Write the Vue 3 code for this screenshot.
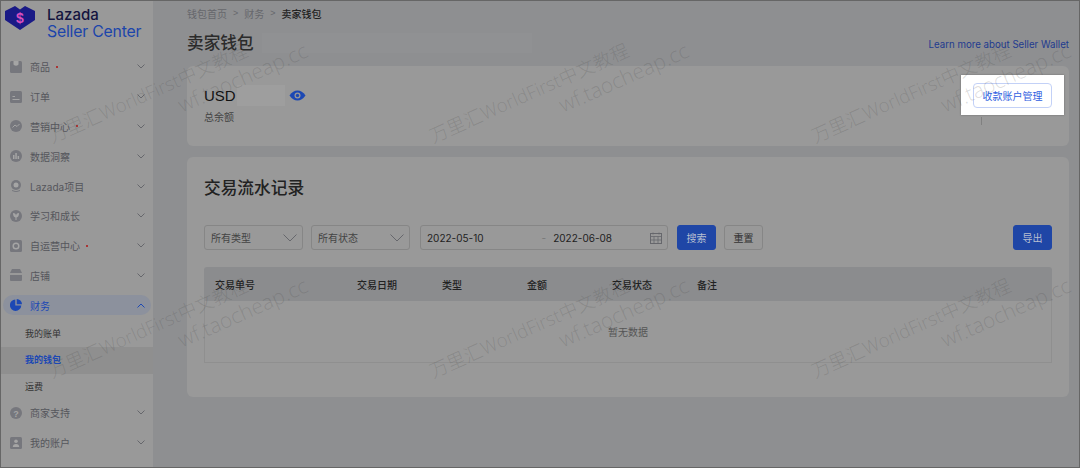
<script setup>
const navTop = [
  { t:'商品', dot:true, i:'bag' }, { t:'订单', i:'order' }, { t:'营销中心', dot:true, i:'chart' },
  { t:'数据洞察', i:'data' }, { t:'Lazada项目', i:'pin' }, { t:'学习和成长', i:'grow' },
  { t:'自运营中心', dot:true, i:'self' }, { t:'店铺', i:'shop' },
]
const subs = [{ t:'我的账单' }, { t:'我的钱包', active:true }, { t:'运费' }]
const navEnd = [{ t:'商家支持', i:'help' }, { t:'我的账户', i:'user' }]
const cols = ['交易单号','交易日期','类型','金额','交易状态','备注']
const marks = []
for (const y of [145, 380]) for (const x of [48, 429, 811]) marks.push({ left: x + 'px', top: (y - 22) + 'px' })
</script>

<template>
  <div class="page">
    <aside class="side">
      <div class="brand">
        <svg class="logo" viewBox="0 0 30 24" width="30" height="24">
          <path d="M0 5 L10 0 L15 3.500 L20 0 L30 5 V14 L15 24 L0 14 Z" fill="#1a1a86"/>
          <text x="15" y="17" text-anchor="middle" class="dollar">$</text>
        </svg>
        <div class="brand-text">
          <div class="b1">Lazada</div>
          <div class="b2">Seller Center</div>
        </div>
      </div>
      <nav class="nav">
        <div v-for="n in navTop" :key="n.t" class="item">
          <svg class="ic" viewBox="0 0 12 12" width="12" height="12">
            <template v-if="n.i==='bag'"><rect width="12" height="12" rx="1.5" fill="#76777d"/><path d="M3.500 0v3.500q2.500 2.500 5 0V0" fill="#a5a5a5"/></template>
            <template v-else-if="n.i==='order'"><rect width="12" height="12" rx="1.5" fill="#76777d"/><path d="M2.500 5h2.500v1H2.500zM2.500 8h7v1h-7z" fill="#a5a5a5"/></template>
            <template v-else-if="n.i==='chart'"><circle cx="6" cy="6" r="6" fill="#76777d"/><path d="M2.500 7.500 5 5l2 1.500L9.500 4" fill="none" stroke="#a5a5a5"/></template>
            <template v-else-if="n.i==='data'"><circle cx="6" cy="6" r="6" fill="#76777d"/><path d="M3 5h1.500v4H3zM5.300 3h1.500v6H5.300zM7.600 6h1.500v3H7.600z" fill="#a5a5a5"/></template>
            <template v-else-if="n.i==='pin'"><circle cx="6" cy="5" r="5" fill="#76777d"/><circle cx="6" cy="5" r="2.500" fill="#a5a5a5"/><path d="M2 10.500q4 2.500 8 0" stroke="#76777d" fill="none"/></template>
            <template v-else-if="n.i==='grow'"><circle cx="6" cy="6" r="6" fill="#76777d"/><path d="M3 3q3 0 3 3 0-3 3-3 0 4-2.500 4.500V10h-1V7.500Q3 7 3 3z" fill="#a5a5a5"/></template>
            <template v-else-if="n.i==='self'"><rect width="12" height="12" rx="1.5" fill="#76777d"/><circle cx="6" cy="6" r="2.800" fill="none" stroke="#a5a5a5" stroke-width="1.500"/></template>
            <template v-else><path d="M2 0h8l2 4H0zM0 6h12v5a1 1 0 0 1-1 1H1a1 1 0 0 1-1-1z" fill="#76777d"/></template>
          </svg>
          <span class="label">{{ n.t }}</span><i v-if="n.dot" class="dot"></i>
          <svg class="chev" viewBox="0 0 8 5" width="8" height="5"><path d="M.5.5 4 4 7.500.5" fill="none" stroke="#66676c"/></svg>
        </div>
        <div class="item open">
          <svg class="ic" viewBox="0 0 12 12" width="12" height="12"><path d="M5.300.5V6.500h6A5.700 5.700 0 1 1 5.300.5zM6.700 0A5.300 5.300 0 0 1 12 5.300H6.700z" fill="#1c48b4"/></svg>
          <span class="label">财务</span>
          <svg class="chev" viewBox="0 0 8 5" width="8" height="5"><path d="M.5 4.500 4 1l3.500 3.500" fill="none" stroke="#1c48b4"/></svg>
        </div>
        <div class="subs">
          <div v-for="s in subs" :key="s.t" class="sub" :class="{ active: s.active }">{{ s.t }}</div>
        </div>
        <div v-for="n in navEnd" :key="n.t" class="item">
          <svg class="ic" viewBox="0 0 12 12" width="12" height="12">
            <template v-if="n.i==='help'"><circle cx="6" cy="6" r="6" fill="#76777d"/><text x="6" y="9.500" text-anchor="middle" class="q">?</text></template>
            <template v-else><rect width="12" height="12" rx="1.500" fill="#76777d"/><circle cx="6" cy="4.300" r="1.800" fill="#a5a5a5"/><path d="M2.800 10q0-3 3.200-3t3.200 3z" fill="#a5a5a5"/></template>
          </svg>
          <span class="label">{{ n.t }}</span>
          <svg class="chev" viewBox="0 0 8 5" width="8" height="5"><path d="M.5.5 4 4 7.500.5" fill="none" stroke="#66676c"/></svg>
        </div>
      </nav>
    </aside>

    <main class="main">
      <div class="crumbs">
        <span>钱包首页</span><em>&gt;</em><span>财务</span><em>&gt;</em><b>卖家钱包</b>
      </div>
      <div class="head">
        <h1>卖家钱包</h1>
        <i class="mask-title"></i>
        <a class="learn">Learn more about Seller Wallet</a>
      </div>

      <section class="card balance">
        <div>
          <div class="amount">
            <span class="usd">USD</span><i class="mask"></i>
            <svg viewBox="0 0 17 11" width="17" height="11" class="eye"><path d="M.500 5.500Q4 .5 8.500.500t8 5q-3.500 5-8 5t-8-5z" fill="#1c48b4"/><circle cx="8.500" cy="5.500" r="3" fill="#999"/><circle cx="8.500" cy="5.500" r="1.700" fill="#1c48b4"/></svg>
          </div>
          <div class="total">总余额</div>
        </div>
        <div class="hl-wrap">
          <div class="hl"><button class="manage">收款账户管理</button></div>
          <i class="tick"></i>
        </div>
      </section>

      <section class="card records">
        <h2>交易流水记录</h2>
        <div class="filters">
          <div class="select"><span>所有类型</span><svg viewBox="0 0 14 8" width="14" height="8"><path d="M.500.500 7 7 13.500.500" fill="none" stroke="#66676c"/></svg></div>
          <div class="select"><span>所有状态</span><svg viewBox="0 0 14 8" width="14" height="8"><path d="M.500.500 7 7 13.500.500" fill="none" stroke="#66676c"/></svg></div>
          <div class="range">
            <span>2022-05-10</span><u>-</u><span>2022-06-08</span>
            <svg viewBox="0 0 12 12" width="12" height="12"><rect x=".5" y="1.500" width="11" height="10" fill="none" stroke="#66676c"/><path d="M.5 4.500h11M3 .5v2M9 .5v2M4 4.500v7M8 4.500v7M.5 8h11" stroke="#66676c" fill="none" stroke-width=".8"/></svg>
          </div>
          <button class="btn primary">搜索</button>
          <button class="btn">重置</button>
          <button class="btn primary export">导出</button>
        </div>
        <div class="table">
          <div class="thead"><div v-for="c in cols" :key="c" class="th">{{ c }}</div></div>
          <div class="tbody">暂无数据</div>
        </div>
      </section>
    </main>

    <div class="marks">
      <div v-for="(m, i) in marks" :key="i" class="mark" :style="m">
        <div>万里汇WorldFirst中文教程</div>
        <div class="l2">wf.taocheap.cc</div>
      </div>
    </div>
  </div>
</template>

<style>
html, body { margin: 0; background: #8e8f91; }
</style>

<style scoped>
.page { position: relative; box-sizing: border-box; width: 1080px; height: 468px; display: flex; overflow: hidden; background: #8e8f91; border: 1px solid #666; font-family: Inter, "Noto Sans CJK SC", sans-serif; color: #333; }
.side { width: 152px; flex: none; background: #999; display: flex; flex-direction: column; }
.brand { display: flex; align-items: flex-start; height: 51px; padding: 5px 0 0 4px; box-sizing: border-box; }
.dollar { font: bold 14px "Liberation Sans", sans-serif; fill: #d94fc0; }
.q { font: bold 9px "Liberation Sans", sans-serif; fill: #a5a5a5; }
.brand-text { margin-left: 12px; margin-top: 0; }
.b1 { font-size: 15px; line-height: 17px; color: #14143f; font-weight: 500; }
.b2 { font-size: 15.800px; line-height: 18px; color: #1c45ab; letter-spacing: -.2px; white-space: nowrap; }
.nav { display: flex; flex-direction: column; }
.item { height: 29.800px; display: flex; align-items: center; padding: 0 5px 0 8px; font-size: 10px; color: #55565c; }
.ic { flex: none; margin-left: 1px; }
.label { margin-left: 8px; white-space: nowrap; }
.dot { width: 2px; height: 2px; border-radius: 50%; background: #b01515; margin-left: 6px; }
.chev { margin-left: auto; margin-right: 3px; }
.item.open { height: 20px; margin: 5px 2px; padding: 0 3px 0 6px; background: #8c919d; border-radius: 10px; color: #1c48b4; }
.subs { display: flex; flex-direction: column; margin-top: .5px; margin-bottom: -2.500px; }
.sub { height: 26.500px; line-height: 26.500px; padding-left: 24px; font-size: 9px; color: #333; }
.sub.active { background: #8f8f8f; color: #1c48b4; font-weight: 700; }
.main { flex: 1; min-width: 0; padding: 0 10px 0 34px; }
.crumbs { height: 24px; display: flex; align-items: center; font-size: 10px; color: #66676c; }
.crumbs em { font-style: normal; margin: 0 6px; font-size: 9px; font-family: "Liberation Sans", sans-serif; }
.crumbs b { color: #222; font-weight: 500; }
.head { height: 41px; display: flex; align-items: flex-start; }
h1 { margin: 7px 0 0; font-size: 16.700px; line-height: 22px; font-weight: 500; color: #2b2b2b; }
.mask-title { width: 270px; height: 20px; margin: 8px 0 0 8px; background: #909193; }
.learn { margin-left: auto; margin-top: 13px; font-size: 9.700px; line-height: 14px; color: #1f3b8f; white-space: nowrap; }
.card { background: #999; border-radius: 6px; }
.balance { height: 80px; display: flex; justify-content: space-between; padding: 0 5px 0 17px; box-sizing: border-box; }
.amount { display: flex; align-items: center; margin-top: 18px; height: 22px; }
.usd { font-size: 15px; color: #111; font-family: "Liberation Sans", sans-serif; }
.mask { width: 48px; height: 21px; background: #9e9e9e; margin-left: 1px; }
.eye { margin-left: 4px; }
.total { font-size: 10px; margin-top: 3px; color: #444; }
.hl-wrap { display: flex; flex-direction: column; align-items: center; margin-top: 9px; }
.hl { background: #fff; padding: 8px 12px 7px; box-shadow: 0 0 2px rgba(0,0,0,.3); display: flex; }
.manage { width: 79px; height: 25px; padding: 0; background: #fff; border: 1px solid #c3d1f7; border-radius: 4px; font: 10px Inter, "Noto Sans CJK SC", sans-serif; color: #2f5ee0; }
.tick { width: 1px; height: 8px; margin-top: 2px; margin-right: 62px; background: #808080; }
.records { margin-top: 11px; height: 240px; padding: 0 17px; box-sizing: border-box; }
h2 { margin: 0; padding-top: 20px; height: 68px; box-sizing: border-box; font-size: 16.700px; line-height: 22px; font-weight: 500; color: #222; }
.filters { display: flex; align-items: stretch; height: 25px; font-size: 10px; color: #333; }
.select { width: 99px; box-sizing: border-box; border: 1px solid #868686; border-radius: 3px; display: flex; align-items: center; justify-content: space-between; padding: 0 5px 0 6px; margin-right: 8px; color: #444; }
.range { width: 248px; box-sizing: border-box; border: 1px solid #868686; border-radius: 3px; display: flex; align-items: center; padding: 0 5px 0 6px; margin-left: 2px; margin-right: 9px; color: #222; }
.range u { text-decoration: none; margin: 0 7px 0 58px; color: #777; }
.range svg { margin-left: auto; }
.btn { width: 39px; box-sizing: border-box; padding: 0; border: 1px solid #868686; background: transparent; border-radius: 3px; font: 10px Inter, "Noto Sans CJK SC", sans-serif; color: #333; margin-right: 8px; }
.btn.primary { background: #1f46a6; border-color: #1f46a6; color: #b8bfd0; }
.export { margin-left: auto; margin-right: 0; }
.table { margin-top: 17px; }
.thead { height: 34px; background: #8b8c8e; border-radius: 3px 3px 0 0; display: grid; grid-template-columns: 142px 85px 85px 85px 85px 1fr; }
.th { padding-left: 11px; display: flex; align-items: center; font-size: 10px; font-weight: 500; color: #222; }
.tbody { height: 62px; box-sizing: border-box; border: 1px solid #8f8f8f; border-top: 0; display: flex; align-items: center; justify-content: center; font-size: 10px; color: #555; padding-bottom: 1px; }
.marks { position: absolute; inset: 0; pointer-events: none; }
.mark { position: absolute; transform: rotate(-24deg); transform-origin: 0 12px; font-size: 18.600px; line-height: 25px; font-weight: 300; color: rgba(60,60,60,.18); white-space: nowrap; font-family: "Open Sans", "Noto Sans CJK SC", sans-serif; }
.l2 { padding-left: 131px; font-size: 21px; }
</style>
